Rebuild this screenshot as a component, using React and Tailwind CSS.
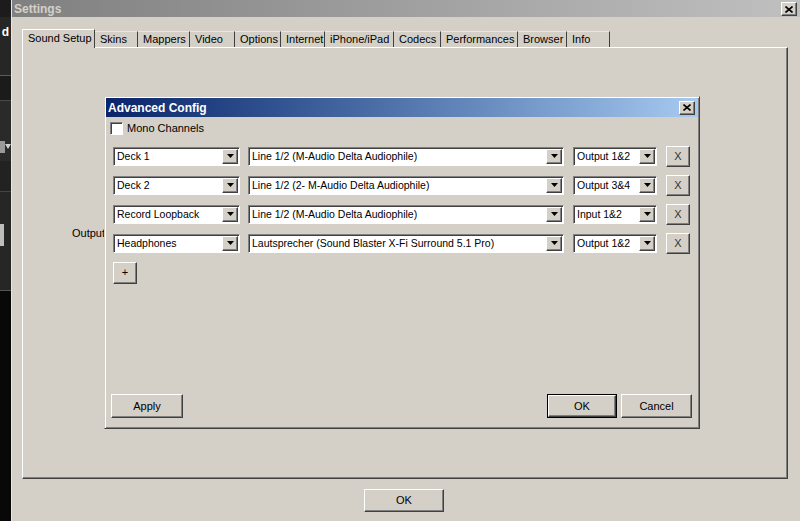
import React from 'react';

const FONT = { fontFamily: '"Liberation Sans", Arial, sans-serif' };

const tabs = ['Sound Setup', 'Skins', 'Mappers', 'Video', 'Options', 'Internet', 'iPhone/iPad', 'Codecs', 'Performances', 'Browser', 'Info'];
const tabWidths = [73, 43, 52, 45, 46, 44, 69, 47, 77, 49, 43];

const rows = [
  { src: 'Deck 1', dev: 'Line 1/2 (M-Audio Delta Audiophile)', ch: 'Output 1&2' },
  { src: 'Deck 2', dev: 'Line 1/2 (2- M-Audio Delta Audiophile)', ch: 'Output 3&4' },
  { src: 'Record Loopback', dev: 'Line 1/2 (M-Audio Delta Audiophile)', ch: 'Input 1&2' },
  { src: 'Headphones', dev: 'Lautsprecher (Sound Blaster X-Fi Surround 5.1 Pro)', ch: 'Output 1&2' },
];

// raised win2k style edge
const raised = 'border border-t-white border-l-white border-r-[#404040] border-b-[#404040] shadow-[inset_-1px_-1px_0_#808080]';

const Combo = ({ value, width }) => (
  <div
    className="flex h-[19px] bg-white border border-t-[#808080] border-l-[#808080] border-r-white border-b-white shadow-[inset_1px_1px_0_#404040]"
    style={{ width }}
  >
    <div className="flex-1 pl-[3px] pt-[2px] text-[10.5px] leading-[13px] text-black truncate">{value}</div>
    <div className={`w-[16px] h-[15px] mt-[1px] mr-[1px] bg-[#d4d0c8] flex items-center justify-center ${raised}`}>
      <svg width="7" height="4" viewBox="0 0 7 4"><path d="M0 0h7L3.5 4z" fill="#000" /></svg>
    </div>
  </div>
);

const Button = ({ children, className = '', isDefault }) => (
  <div className={`${isDefault ? 'border border-black' : ''} ${className}`}>
    <div className={`h-full bg-[#d4d0c8] flex items-center justify-center text-[11px] text-black ${raised}`}>{children}</div>
  </div>
);

const CloseBox = ({ className = '' }) => (
  <div className={`w-[16px] h-[14px] bg-[#d4d0c8] flex items-center justify-center ${raised} ${className}`}>
    <svg width="8" height="7" viewBox="0 0 8 7">
      <path d="M0.5 0.5L7.5 6.5M7.5 0.5L0.5 6.5" stroke="#000" strokeWidth="1.6" />
    </svg>
  </div>
);

export default function App() {
  return (
    <div className="relative w-[800px] h-[521px] overflow-hidden bg-black flex" style={FONT}>
      {/* background app peeking on the left */}
      <div className="w-[11px] flex flex-col overflow-hidden">
        <div className="h-[17px] bg-[#1c1c1c]" />
        <div className="h-[58px] bg-[#262626] flex justify-end pt-[8px]">
          <span className="text-white font-bold text-[12px] leading-[14px] pr-[2px]">d</span>
        </div>
        <div className="h-[1px] bg-[#5a5a5a]" />
        <div className="h-[24px] bg-[#1b1b1b]" />
        <div className="h-[1px] bg-[#4a4a4a]" />
        <div className="h-[60px] bg-[#2a2a2a] flex items-end pb-[8px]">
          <div className="w-[5px] h-[12px] bg-[#9a9a9a]" />
          <svg width="6" height="6" viewBox="0 0 6 6" className="mb-[3px]"><path d="M0 0h6L3 5z" fill="#cfcfcf" /></svg>
        </div>
        <div className="h-[30px] bg-[#222]" />
        <div className="h-[1px] bg-[#444]" />
        <div className="h-[98px] bg-[#262626] pt-[32px]">
          <div className="w-[4px] h-[22px] bg-[#bdbdbd]" />
        </div>
        <div className="h-[1px] bg-[#555]" />
        <div className="flex-1 bg-[#080808]" />
      </div>

      {/* Settings window */}
      <div className="flex-1 flex flex-col bg-[#d4d0c8] border-l border-l-[#e8e6e0]">
        <div className="h-[17px] flex items-center justify-between bg-gradient-to-r from-[#808080] to-[#c0c0c0] pl-[2px] pr-[3px]">
          <span className="text-[12px] font-bold text-[#d4d0c8]">Settings</span>
          <CloseBox className="mt-[1px]" />
        </div>

        <div className="flex-1 flex flex-col pl-[10px] pr-[12px] pt-[11px]">
          {/* tabs */}
          <div className="flex items-end h-[19px] relative z-10">
            {tabs.map((t, i) => (
              <div
                key={t}
                className={`${i === 0 ? 'h-[19px] pt-[1px] -mb-[1px] bg-[#d4d0c8] border-l border-l-white border-t border-t-white' : 'h-[16px] pt-0 border-t border-t-[#e8e6e0]'} border-r border-r-[#404040] pl-[5px] text-[11px] leading-[14px] text-black whitespace-nowrap`}
                style={{ width: tabWidths[i] }}
              >
                {t}
              </div>
            ))}
          </div>
          <div className="h-[432px] border border-t-white border-l-white border-r-[#404040] border-b-[#404040] shadow-[inset_-1px_-1px_0_#808080] flex items-start">
            <div className="mt-[177px] ml-[49px] text-[11px] text-black">Output</div>
          </div>
          <div className="flex-1 flex items-center justify-center">
            <Button className="w-[80px] h-[23px] -ml-[2px]">OK</Button>
          </div>
        </div>
      </div>

      {/* Advanced Config dialog */}
      <div className="absolute left-[104px] top-[96px] w-[596px] h-[333px] bg-[#d4d0c8] border border-t-[#d4d0c8] border-l-[#d4d0c8] border-r-[#404040] border-b-[#404040] shadow-[inset_1px_1px_0_white,inset_-1px_-1px_0_#808080] p-[1px] flex flex-col">
        <div className="h-[19px] flex items-center justify-between bg-gradient-to-r from-[#0a246a] to-[#a6caf0] pl-[2px] pr-[3px]">
          <span className="text-[12px] font-bold text-white">Advanced Config</span>
          <CloseBox />
        </div>
        <div className="flex items-center gap-[4px] mt-[3px] ml-[4px]">
          <div className="w-[13px] h-[13px] bg-white border border-t-[#808080] border-l-[#808080] border-r-white border-b-white shadow-[inset_1px_1px_0_#404040]" />
          <span className="text-[11px] text-black">Mono Channels</span>
        </div>
        <div className="flex flex-col gap-[8px] mt-[9px] ml-[7px]">
          {rows.map((r, i) => (
            <div key={i} className="flex items-center">
              <Combo value={r.src} width={127} />
              <div className="w-[8px]" />
              <Combo value={r.dev} width={316} />
              <div className="w-[9px]" />
              <Combo value={r.ch} width={84} />
              <div className="w-[9px]" />
              <Button className="w-[24px] h-[21px]"><span className="text-[#333]">X</span></Button>
            </div>
          ))}
        </div>
        <div className="ml-[7px] mt-[8px]">
          <Button className="w-[24px] h-[22px]">+</Button>
        </div>
        <div className="flex-1" />
        <div className="flex items-center mb-[9px] ml-[5px] mr-[6px]">
          <Button className="w-[72px] h-[24px]">Apply</Button>
          <div className="flex-1" />
          <Button isDefault className="w-[70px] h-[24px]">OK</Button>
          <div className="w-[4px]" />
          <Button className="w-[71px] h-[24px]">Cancel</Button>
        </div>
      </div>
    </div>
  );
}
